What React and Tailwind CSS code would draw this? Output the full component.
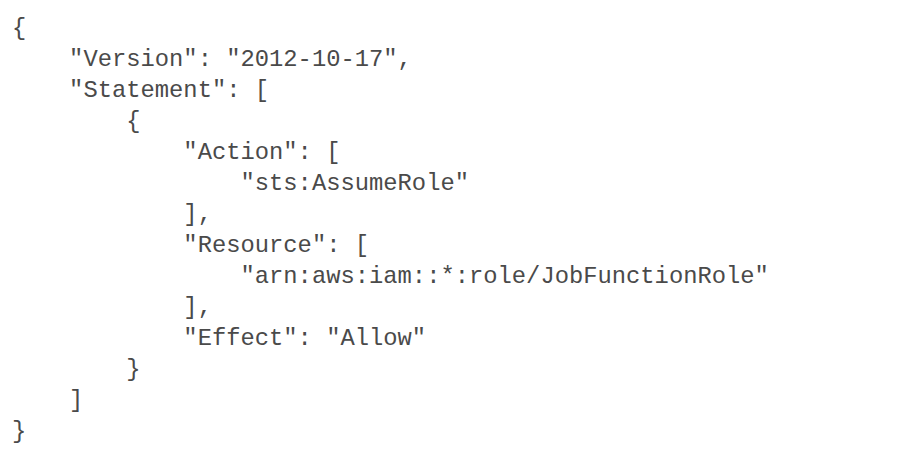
import React from 'react';

const policy = [
  '{',
  '    "Version": "2012-10-17",',
  '    "Statement": [',
  '        {',
  '            "Action": [',
  '                "sts:AssumeRole"',
  '            ],',
  '            "Resource": [',
  '                "arn:aws:iam::*:role/JobFunctionRole"',
  '            ],',
  '            "Effect": "Allow"',
  '        }',
  '    ]',
  '}',
];

export default function App() {
  return (
    <div className="w-[922px] h-[462px] bg-white overflow-hidden">
      <pre className="pl-[12px] pt-[13px] m-0 font-['Courier_New','Liberation_Mono',monospace] text-[23.8px] leading-[31px] text-[#4a4a4a]">
        {policy.map((line, idx) => (
          <div key={idx}>{line}</div>
        ))}
      </pre>
    </div>
  );
}
